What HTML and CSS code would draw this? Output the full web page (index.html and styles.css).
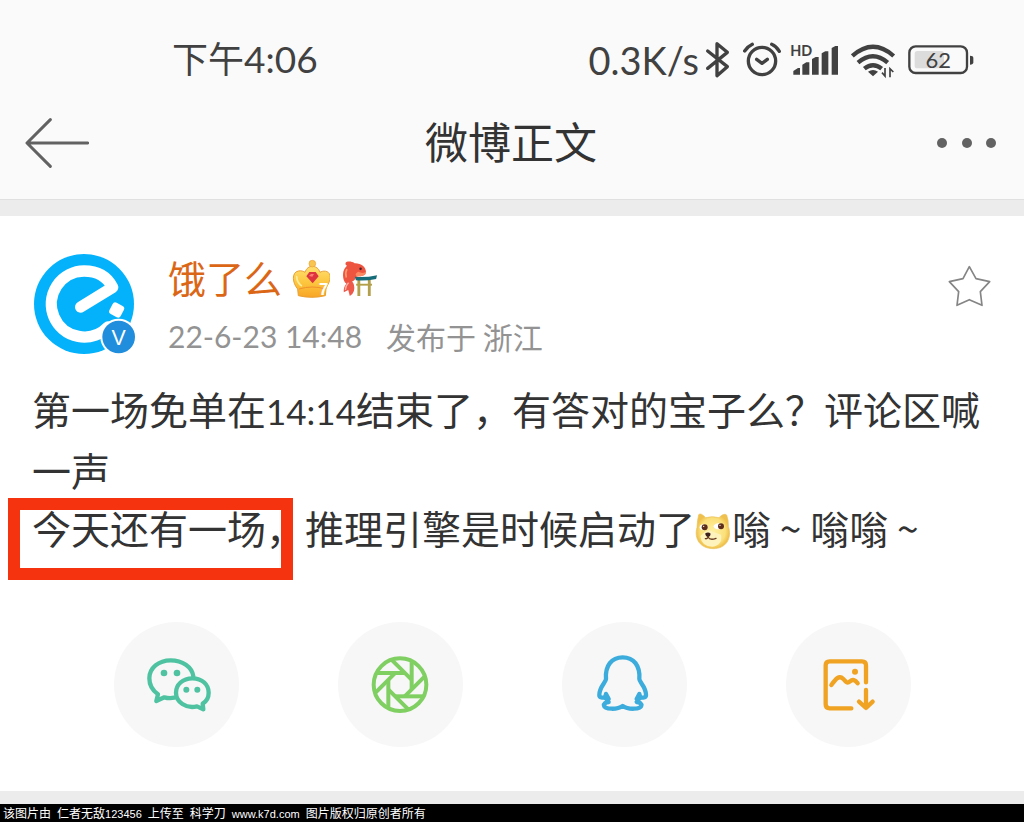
FILE: index.html
```
<!DOCTYPE html>
<html lang="zh-CN">
<head>
<meta charset="utf-8">
<meta name="viewport" content="width=device-width, initial-scale=1">
<title>微博正文</title>
<link rel="stylesheet" href="styles.css">
</head>
<body>
<div class="top">
  <div class="status">
    <time class="clock">下午<span class="digits">4:06</span></time>
    <div class="indicators">
      <span class="speed">0.3K/s</span>
      <svg class="bluetooth" viewBox="375 27 75 120" fill="none" stroke="#414141" stroke-width="10" stroke-linejoin="round" stroke-linecap="round"><path d="M383 60L442 107 411 134V38L442 64 383 112"/></svg>
      <svg class="alarm" viewBox="486 27 120 120" fill="none" stroke="#414141" stroke-width="10" stroke-linecap="round" stroke-linejoin="round"><circle cx="546" cy="90" r="41"/><path d="M494 60Q504 46 517 40M575 40Q589 46 598 61M530 85l16 12 16-12"/></svg>
      <svg class="signal" viewBox="630 27 147 120" fill="#414141"><text x="631" y="74" font-size="43">HD</text><path d="M640 131v-11l14-9h6v20zM667 131v-30l12-7h9v37zM696 131V84l11-6h9v53zM725 131V67l11-6h9v70zM755 131V51l11-6h8v86z"/></svg>
      <svg class="wifi" viewBox="810 27 135 120" fill="none" stroke="#414141" stroke-width="13"><path d="M814 75Q876 20 938 75M831 95Q876 57 920 95M850 113Q876 92 902 113"/><path fill="#414141" stroke="none" d="M861 122q15-10 30 0l-15 14z"/><path stroke-width="5" d="M903 125l9 10V111M937 123l-10-10v26"/></svg>
      <svg class="battery" viewBox="984 27 198 120" fill="#414141"><rect x="988" y="46" width="173" height="80" rx="19" fill="none" stroke="#414141" stroke-width="7"/><rect x="1004" y="60" width="88" height="52" rx="8" fill="#dcdcdc"/><path d="M1170 74q10 0 10 7v13q0 7-10 7z"/><text x="1075" y="111" font-size="66" text-anchor="middle">62</text></svg>
    </div>
  </div>
  <header class="nav">
    <button class="icon-button" type="button" aria-label="返回"><svg class="back" viewBox="76 50 192 156" fill="none" stroke="#626262" stroke-width="9" stroke-linecap="round" stroke-linejoin="round"><path d="M152 58L82 128l70 70M84 128h180"/></svg></button>
    <h1 class="title">微博正文</h1>
    <button class="icon-button more" type="button" aria-label="更多"><svg class="dots" viewBox="0 0 60 12" fill="#626262"><circle cx="5" cy="6" r="5"/><circle cx="30" cy="6" r="5"/><circle cx="54" cy="6" r="5"/></svg></button>
  </header>
</div>

<main class="card">
  <div class="author">
    <svg class="avatar" viewBox="42 42 306 300"><circle cx="192" cy="192" r="150" fill="#04b2fc"/><path d="M182 201L278 142C258 103 225 93 192 93a99 99 0 1 0 72 168" fill="none" stroke="#fff" stroke-width="34" stroke-linecap="round" stroke-linejoin="round"/><rect x="271" y="191" width="38" height="38" rx="9" fill="#fff" transform="rotate(-62 290 210)"/><circle cx="296" cy="291" r="55" fill="#fff"/><circle cx="296" cy="291" r="49" fill="#218ddd"/><text class="vee" x="296" y="314" font-size="64" text-anchor="middle">V</text></svg>
    <div class="byline">
      <div class="name-row">
        <a class="name" href="#">饿了么</a>
        <svg class="crown" viewBox="3 4 114 120"><defs><linearGradient id="gold" x1="0" y1="0" x2="0" y2="1"><stop offset="0" stop-color="#ffe071"/><stop offset=".5" stop-color="#fdc740"/><stop offset="1" stop-color="#f8a524"/></linearGradient></defs><path d="M22 114L20 94C4 76 1 44 22 40c9-2 16 1 20 4 4-12 12-18 22-18s19 6 23 18c7-5 26-7 30 9 3 17-9 30-12 41l-2 20q-40 10-81 0z" fill="url(#gold)" stroke="#e9a034" stroke-width="3"/><circle cx="64" cy="18" r="10" fill="#f9c551" stroke="#e9a034" stroke-width="2"/><path d="M24 94q40-12 79 0" fill="none" stroke="#f0902c" stroke-width="3"/><path d="M17 57q1 18 14 27" fill="none" stroke="#ffec9d" stroke-width="5" stroke-linecap="round"/><path d="M46 56l9-13h19l9 13-18 21z" fill="#dd3440"/><path d="M54 55l6-6h9l-5 8z" fill="#ff7c70"/><text class="level" x="112" y="113" font-size="50" text-anchor="end">7</text></svg>
        <svg class="koi" viewBox="148 4 120 120"><path d="M161 64l22 4q14 14 9 34-3 10-13 16l-5-19-14 7q-2-14 8-28-8-3-7-14z" fill="#ed594b"/><path d="M165 99q0-13 10-23" fill="none" stroke="#ffb2a4" stroke-width="4"/><path d="M160 68c-6-23 0-37 10-46-6-3-6-9-2-12 10-2 18-1 26 4 20-1 36 12 36 27 0 13-15 14-27 15-8 1-5 9-11 13-10 7-24 6-32-1z" fill="#ee5541"/><path d="M203 56c13-1 27-2 27-15-9 6-17 4-24 0-9 5-12 10-3 15z" fill="#fb8a63"/><path d="M170 33q-7 13-2 26" fill="none" stroke="#ff9b6d" stroke-width="5"/><circle cx="213" cy="32" r="4" fill="#4b2024"/><path d="M203 64h9v54h-9zM236 64h9v54h-9z" fill="#b3a04b"/><path d="M199 79h50v6h-50z" fill="#b3a04b"/><path d="M195 57q34 3 70-5l-3 12q-34 7-64 4z" fill="#176c7a"/></svg>
      </div>
      <div class="meta"><time class="stamp">22-6-23 14:48</time><span>发布于 浙江</span></div>
    </div>
    <button class="icon-button favorite" type="button" aria-label="收藏"><svg class="star" viewBox="83 464 129 126" fill="none" stroke="#858585" stroke-width="5" stroke-linejoin="round"><path d="M147 469l20 36 41 9-28 30 5 41-38-17-37 17 5-41-28-30 41-9z"/></svg></button>
  </div>

  <p class="post">第一场免单在<span class="numeral">14:14</span>结束了，有答对的宝子么？评论区喊<br>一声<br><span class="marked">今天还有一场，<span class="frame"></span></span>推理引擎是时候启动了<svg class="doge" viewBox="8 10 111 120"><defs><radialGradient id="fur"><stop offset="0" stop-color="#fff0a0"/><stop offset=".75" stop-color="#fbe07a"/><stop offset="1" stop-color="#efc04c"/></radialGradient></defs><path d="M14 62q1-22 5-38 6-7 21 9 20-6 40 0 15-15 23-8 6 16 5 34c12 36-7 67-45 67S4 98 14 62z" fill="url(#fur)" stroke="#eac35c" stroke-width="2"/><path d="M24 88q12-14 26-18 15 8 36 14 6 30-26 36-32 0-36-32z" fill="#fff3bd"/><ellipse cx="34" cy="62" rx="12" ry="9" fill="#fff"/><ellipse cx="79" cy="59" rx="15" ry="9" fill="#fff"/><circle cx="37" cy="62" r="9" fill="#5c2d18"/><circle cx="86" cy="59" r="9" fill="#5c2d18"/><circle cx="34" cy="59" r="2" fill="#fff"/><circle cx="83" cy="56" r="2" fill="#fff"/><path d="M39 80q9-6 16 1 0 8-8 11-9-4-8-12z" fill="#3d211c"/><path d="M47 91q-1 6-8 5M47 91q6 11 24 4" fill="none" stroke="#673a20" stroke-width="4" stroke-linecap="round"/></svg>嗡 ~ 嗡嗡 ~</p>

  <div class="shares">
    <button class="share" type="button" aria-label="微信"><svg viewBox="120 116 216 216" fill="none" stroke="#4fc3a1" stroke-width="13" stroke-linejoin="round" stroke-linecap="round"><path d="M223 262q-15 3-30-1l-24 11 5-20q-26-18-26-48c0-31 28-54 64-54 35 0 64 20 68 48"/><path d="M277 204c30 0 49 19 49 43 0 15-7 26-18 33l2 17-19-9c-33 8-63-13-63-41 0-24 20-43 49-43z"/><g fill="#4fc3a1" stroke="none"><circle cx="192" cy="188" r="10"/><circle cx="231" cy="188" r="10"/><circle cx="259" cy="238" r="9"/><circle cx="292" cy="238" r="9"/></g></svg></button>
    <button class="share" type="button" aria-label="朋友圈"><svg viewBox="793 116 216 216" fill="none" stroke="#80cf62" stroke-width="12"><defs><path id="blade" d="M831 188h85"/></defs><circle cx="901" cy="223" r="79"/><use href="#blade"/><use href="#blade" transform="rotate(45 901 223)"/><use href="#blade" transform="rotate(90 901 223)"/><use href="#blade" transform="rotate(135 901 223)"/><use href="#blade" transform="rotate(180 901 223)"/><use href="#blade" transform="rotate(225 901 223)"/><use href="#blade" transform="rotate(270 901 223)"/><use href="#blade" transform="rotate(315 901 223)"/></svg></button>
    <button class="share" type="button" aria-label="QQ"><svg viewBox="114 116 216 216" fill="none" stroke="#3cacdc" stroke-width="13" stroke-linejoin="round" stroke-linecap="round"><path d="M168 206c-3-40 17-65 50-65s53 25 50 65c0 10 20 23 20 48 0 8-10 10-20 6-1 9-3 12-8 15 10 1 15 5 14 11-2 12-41 12-56 1-15 11-54 11-56-1-1-6 4-10 14-11-5-3-7-6-8-15-10 4-20 2-20-6 0-25 20-38 20-48z"/><path d="M168 251l-3 11 11 4zM268 251l3 11-11 4z"/></svg></button>
    <button class="share" type="button" aria-label="保存图片"><svg viewBox="788 116 216 216" fill="none" stroke="#f0a323" stroke-width="13" stroke-linecap="round" stroke-linejoin="round"><path d="M950 216v-51q0-12-12-12H841q-12 0-12 12v117q0 12 12 12h65M846 224c13-18 23-31 36-18 9 9 11 15 20 7 8-7 15-5 23 6M950 239v53M929 274l21 19 20-19"/><circle cx="917" cy="184" r="9" fill="#f0a323" stroke="none"/></svg></button>
  </div>
</main>

<footer class="credit"><span class="han">该图片由</span> <span class="han">仁者无敌</span><span class="latin">123456</span> <span class="han">上传至</span> <span class="han">科学刀</span> <span class="latin">www.k7d.com</span> <span class="han">图片版权归原创者所有</span></footer>
</body>
</html>
```
FILE: styles.css
```
* { box-sizing: border-box; }

body {
  margin: 0;
  background: #ececec;
  color: #333;
  font-family: "Noto Sans CJK SC", sans-serif;
}

svg { display: block; flex: none; }

.top {
  background: #fafafa;
  border-bottom: 1px solid #e0e0e0;
}

.status {
  display: flex;
  align-items: center;
  justify-content: space-between;
  padding: 32px 50px 0 172px;
  height: 88px;
  color: #414141;
}

.clock { padding-bottom: 4px; font-size: 36px; line-height: 56px; }
.speed, .digits, .stamp, .numeral, .battery, .signal { font-family: Lato, "Noto Sans CJK SC", sans-serif; }
.digits { font-size: 37px; }
.speed { margin-right: -6px; font-size: 38px; line-height: 56px; }
.indicators { display: flex; align-items: center; gap: 12px; }
.indicators svg { height: 40px; }
.bluetooth { width: 25px; }
.alarm { width: 40px; margin-right: -4px; }
.signal { width: 49px; font-weight: 700; }
.wifi { width: 45px; }
.battery { width: 66px; }

.nav {
  display: grid;
  grid-template-columns: 1fr auto 1fr;
  align-items: center;
  height: 111px;
  padding: 0 27px 2px 25px;
}

.title {
  margin: 0;
  padding-bottom: 6px;
  font-size: 43px;
  font-weight: 400;
  line-height: 64px;
}

.icon-button {
  justify-self: start;
  padding: 0;
  border: 0;
  background: none;
  cursor: pointer;
}

.more { justify-self: end; }
.back { width: 64px; height: 52px; }
.dots { width: 60px; height: 12px; }

.card {
  margin: 16px 0 13px;
  padding: 38px 32px 44px;
  background: #fff;
}

.author { display: flex; align-items: flex-start; padding: 0 1px 0 2px; }
.avatar { width: 102px; height: 100px; }
.vee { fill: #fff; font-family: "Liberation Sans", sans-serif; }
.byline { flex: 1; padding-left: 32px; }
.name-row { display: flex; align-items: center; gap: 10px; height: 50px; }
.name {
  padding-bottom: 4px;
  color: #db6716;
  font-size: 38px;
  line-height: 50px;
  text-decoration: none;
}
.crown, .koi { width: 38px; height: 40px; }
.level { fill: #fff; font-family: "Liberation Sans", sans-serif; font-weight: 700; }

.meta {
  display: flex;
  align-items: center;
  gap: 24px;
  margin-top: 8px;
  color: #939393;
  font-size: 30px;
  line-height: 48px;
}

.favorite { margin-top: 11px; }
.star { width: 43px; height: 42px; }

.post {
  margin: 19px 0 66px;
  font-size: 39px;
  line-height: 58px;
}

.numeral { font-size: 35px; }
.marked { position: relative; }

.frame {
  position: absolute;
  inset: -1px 12px -25px -24px;
  border: 12px solid #f5330f;
}

.doge {
  display: inline-block;
  width: 37px;
  height: 40px;
  vertical-align: -6px;
}

.shares {
  display: grid;
  grid-template-columns: repeat(4, 1fr);
  justify-items: center;
  padding: 0 32px;
}

.share {
  display: grid;
  place-items: center;
  width: 125px;
  height: 125px;
  padding: 0;
  border: 0;
  border-radius: 50%;
  background: #f7f7f7;
  cursor: pointer;
}

.share svg { width: 72px; height: 72px; }

.credit {
  padding: 0 3px;
  background: #000;
  color: #fff;
  font-family: "Liberation Mono", monospace;
  font-size: 10px;
  line-height: 18px;
}

.han { font-family: "Noto Sans CJK SC", sans-serif; font-size: 12px; }
.latin { font-family: "Liberation Sans", sans-serif; font-size: 11px; }
```
